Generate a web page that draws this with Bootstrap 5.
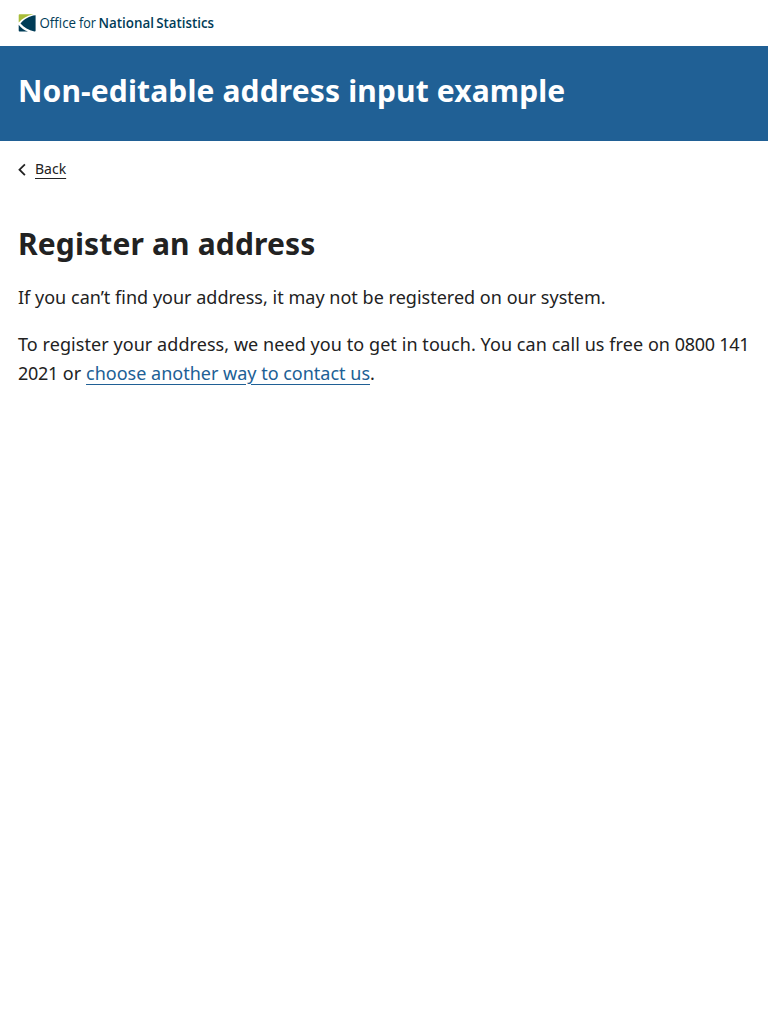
<!DOCTYPE html>
<html lang="en">
<head>
<meta charset="utf-8">
<meta name="viewport" content="width=device-width, initial-scale=1">
<title>Non-editable address input example</title>
<link href="https://cdn.jsdelivr.net/npm/bootstrap@5.3.0/dist/css/bootstrap.min.css" rel="stylesheet">
<style>
body { font-family: "Noto Sans", sans-serif; font-size: 18px; line-height: 28.8px; color: #222; }
.page-gutter { padding-left: 18px; padding-right: 18px; }
.masthead { height: 46px; padding-top: 13px; }
.title-bar { background: #206095; height: 95px; padding-top: 25px; }
h1 { font-size: 30px; font-weight: 700; line-height: 40px; letter-spacing: .14px; }
.back-link { font-size: 14px; line-height: 22px; padding-top: 17px; }
.back-link svg { margin-right: 9px; margin-top: 1px; }
a { text-underline-offset: 4px; text-decoration-thickness: 1px; }
.back-link a { color: #222; }
main { padding-top: 44px; }
main h1 { margin-bottom: 19px; }
main p { margin-bottom: 18px; word-spacing: .08px; }
main p.contact { letter-spacing: .067px; word-spacing: 0; }
main p a { color: #206095; letter-spacing: 0; }
.figures { letter-spacing: -.28px; }
.logo-text { font-family: "Open Sans", "Noto Sans", sans-serif; font-size: 15px; fill: #003c57; }
</style>
</head>
<body>
<header>
  <div class="masthead page-gutter">
    <svg class="d-block overflow-visible" width="200" height="20" viewBox="0 0 200 20" role="img" aria-label="Office for National Statistics">
      <path fill="#a8bd3a" d="M1.500 1.200H15.500C9 2.500 4 5.500 .7 9.500V2.200Q.7 1.200 1.500 1.200Z"/>
      <path fill="#003c57" d="M17.600 2.300V17.700Q17.600 18.500 16.500 18.400C10.500 17.500 6 14.500 2.500 10.500C6.500 6 11 2.900 17.600 2.300ZM.7 11.700C3 15 6.500 17.500 10 18.600H1.500Q.7 18.600 .7 17.600Z"/>
      <g class="logo-text">
        <text x="21.500" y="15" textLength="36.500" lengthAdjust="spacingAndGlyphs">Office</text>
        <text x="61" y="15" textLength="17" lengthAdjust="spacingAndGlyphs">for</text>
        <g font-weight="600">
          <text x="80.500" y="15" textLength="55.500" lengthAdjust="spacingAndGlyphs">National</text>
          <text x="138.300" y="15" textLength="57.700" lengthAdjust="spacingAndGlyphs">Statistics</text>
        </g>
      </g>
    </svg>
  </div>
  <div class="title-bar page-gutter text-white">
    <h1 class="m-0">Non-editable address input example</h1>
  </div>
</header>
<div class="page-gutter">
  <nav class="back-link d-flex align-items-center" aria-label="Back">
    <svg width="8" height="13" viewBox="0 0 8 13" fill="none" stroke="#222" stroke-width="1.800"><path d="M6.900 1.300 1.500 6.700 6.900 12.100"/></svg>
    <a href="#">Back</a>
  </nav>
  <main>
    <h1>Register an address</h1>
    <p>If you can’t find your address, it may not be registered on our system.</p>
    <p class="contact me-n1">To register your address, we need you to get in touch. You can call us free on <span class="figures">0800 141 2021</span> or <a href="#">choose another way to contact us</a>.</p>
  </main>
</div>
<script src="https://cdn.jsdelivr.net/npm/bootstrap@5.3.0/dist/js/bootstrap.bundle.min.js"></script>
</body>
</html>
